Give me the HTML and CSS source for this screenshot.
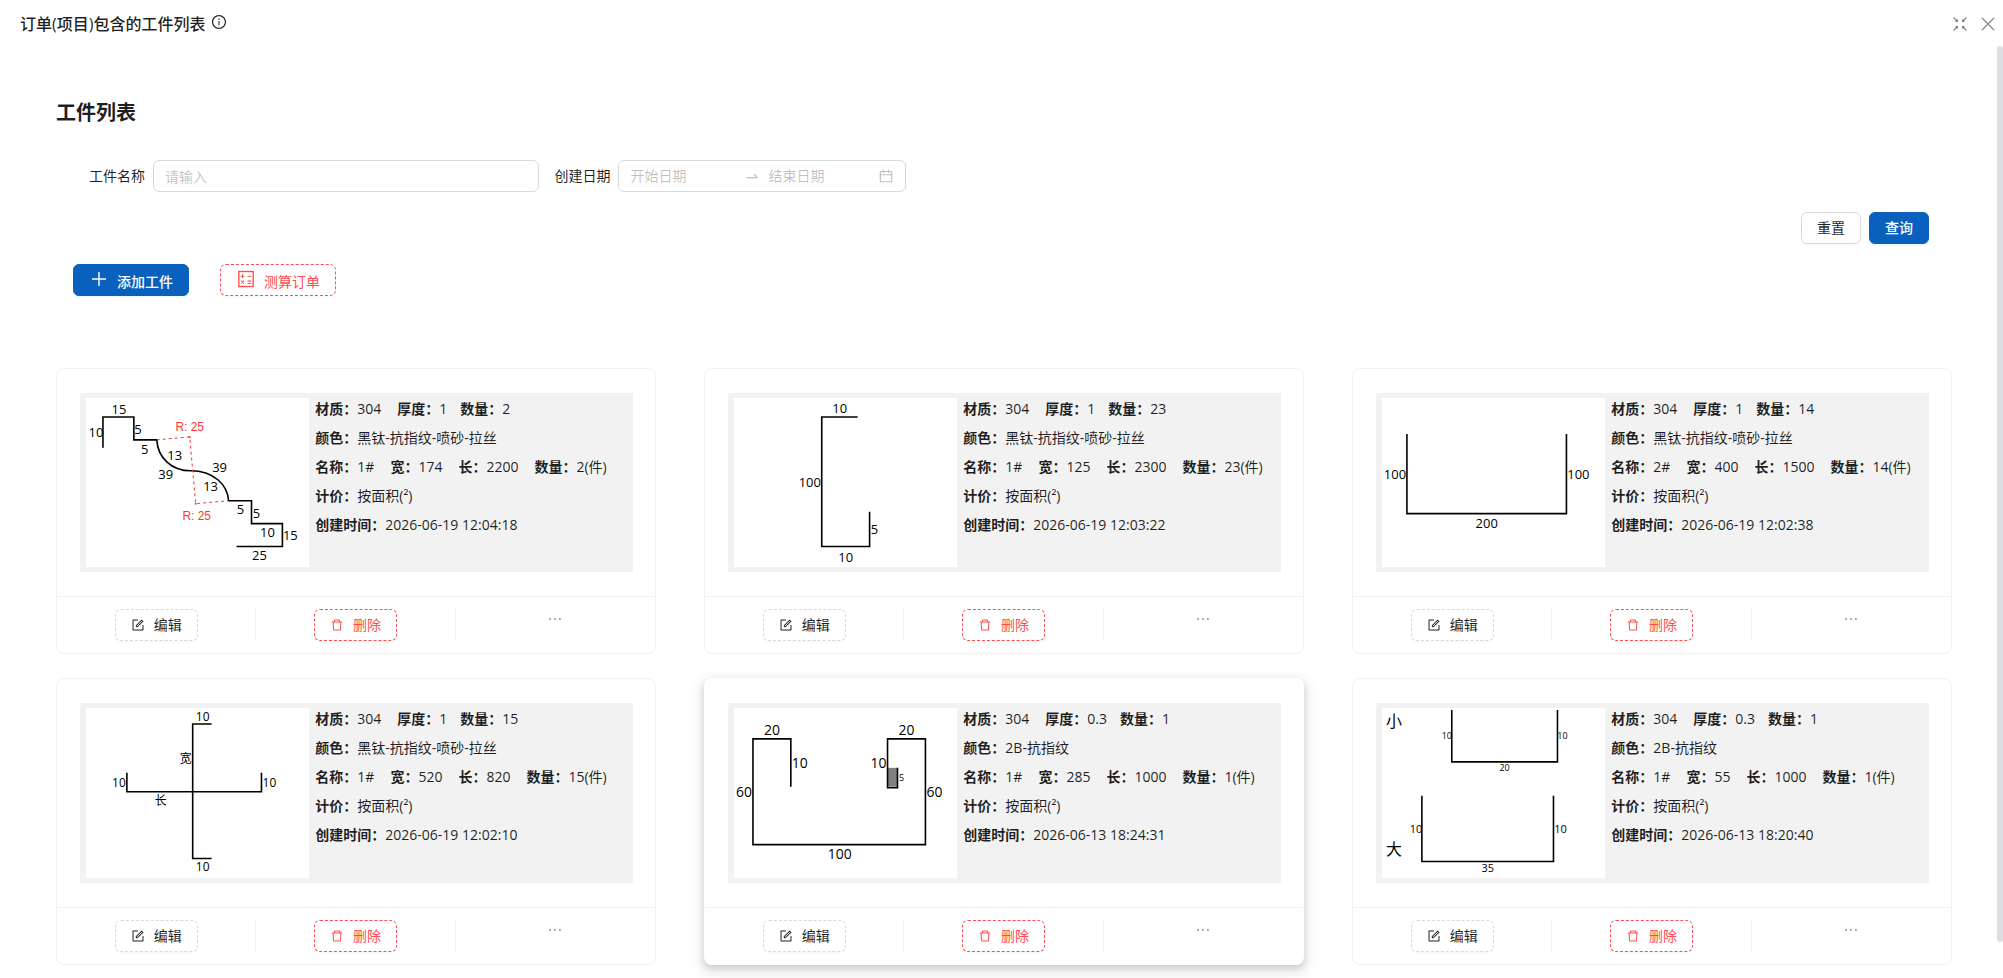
FILE: index.html
```
<!DOCTYPE html>
<html lang="zh-CN">
<head>
<meta charset="utf-8">
<meta name="viewport" content="width=device-width, initial-scale=1.0">
<title>订单(项目)包含的工件列表</title>
<link rel="stylesheet" href="styles.css">
</head>
<body>
<!-- icon set -->
<svg class="icon-defs" viewBox="0 0 1024 1024">
    <defs>
        <symbol id="i-info" viewBox="0 0 1024 1024"><path d="M512 64C264.6 64 64 264.6 64 512s200.6 448 448 448 448-200.6 448-448S759.4 64 512 64zm0 820c-205.4 0-372-166.6-372-372s166.6-372 372-372 372 166.6 372 372-166.6 372-372 372z"/><path d="M464 336a48 48 0 1096 0 48 48 0 10-96 0zm72 112h-48c-4.4 0-8 3.6-8 8v272c0 4.4 3.6 8 8 8h48c4.4 0 8-3.6 8-8V456c0-4.4-3.6-8-8-8z"/></symbol>
        <symbol id="i-shrink" viewBox="0 0 1024 1024"><g fill="none" stroke="currentColor" stroke-width="100"><path d="M40 40l240 240M984 40L744 280M40 984l240-240M984 984L744 744"/></g><path d="M370 130v240H130zM654 130v240h240zM370 894V654H130zM654 894V654h240z"/></symbol>
        <symbol id="i-close" viewBox="0 0 1024 1024"><path d="M60 60l904 904M964 60L60 964" fill="none" stroke="currentColor" stroke-width="96"/></symbol>
        <symbol id="i-swap" viewBox="0 0 1024 1024"><path d="M873.1 596.2l-164-208A32 32 0 00684 376h-64.8c-6.7 0-10.4 7.7-6.3 13l144.3 183H152c-4.4 0-8 3.6-8 8v60c0 4.4 3.6 8 8 8h695.9c26.8 0 41.7-30.8 25.2-51.8z"/></symbol>
        <symbol id="i-calendar" viewBox="0 0 1024 1024"><path d="M880 184H712v-64c0-4.4-3.6-8-8-8h-56c-4.4 0-8 3.6-8 8v64H384v-64c0-4.4-3.6-8-8-8h-56c-4.4 0-8 3.6-8 8v64H144c-17.7 0-32 14.3-32 32v664c0 17.7 14.3 32 32 32h736c17.7 0 32-14.3 32-32V216c0-17.7-14.3-32-32-32zm-40 656H184V460h656v380zM184 392V256h128v48c0 4.4 3.6 8 8 8h56c4.4 0 8-3.6 8-8v-48h256v48c0 4.4 3.6 8 8 8h56c4.4 0 8-3.6 8-8v-48h128v136H184z"/></symbol>
        <symbol id="i-plus" viewBox="0 0 1024 1024"><path d="M476 152h72v720h-72zM152 476h720v72H152z"/></symbol>
        <symbol id="i-calc" viewBox="0 0 1024 1024"><g fill="none" stroke="currentColor" stroke-width="70"><rect x="144" y="128" width="736" height="768"/><path d="M240 370h190M335 275v190M590 370h190M260 600l150 150M410 600L260 750M590 620h190M590 740h190" stroke-width="56"/></g></symbol>
        <symbol id="i-edit" viewBox="0 0 1024 1024"><path d="M904 512h-56c-4.4 0-8 3.6-8 8v320H184V184h320c4.4 0 8-3.6 8-8v-56c0-4.4-3.6-8-8-8H144c-17.7 0-32 14.3-32 32v736c0 17.7 14.3 32 32 32h736c17.7 0 32-14.3 32-32V520c0-4.4-3.6-8-8-8z"/><path d="M355.9 534.9L354 653.8c-.1 8.9 7.1 16.2 16 16.2h.4l118-2.9c2-.1 4-.9 5.4-2.3l415.9-415c3.1-3.1 3.1-8.2 0-11.3L785.4 114.3c-1.6-1.6-3.6-2.3-5.7-2.3s-4.1.8-5.7 2.3l-415.8 415a8.3 8.3 0 00-2.3 5.6zm63.5 23.6L779.7 199l45.2 45.1-360.5 359.7-45.7 1.1.7-46.4z"/></symbol>
        <symbol id="i-delete" viewBox="0 0 1024 1024"><path d="M360 184h-8c4.4 0 8-3.6 8-8v8h304v-8c0 4.4 3.6 8 8 8h-8v72h72v-80c0-35.3-28.7-64-64-64H352c-35.3 0-64 28.7-64 64v80h72v-72zm504 72H160c-17.7 0-32 14.3-32 32v32c0 4.4 3.6 8 8 8h60.4l24.7 523c1.6 34.1 29.8 61 63.9 61h454c34.2 0 62.3-26.8 63.9-61l24.7-523H888c4.4 0 8-3.6 8-8v-32c0-17.7-14.3-32-32-32zM731.3 840H292.7l-24.2-512h487l-24.2 512z"/></symbol>
        <symbol id="i-more" viewBox="0 0 1024 1024"><circle cx="150" cy="512" r="70"/><circle cx="512" cy="512" r="70"/><circle cx="874" cy="512" r="70"/></symbol>
    </defs>
</svg>

<div class="dialog">
    <header class="dialog-header">
        <h1>订单(项目)包含的工件列表</h1>
        <svg class="icon info"><use href="#i-info"/></svg>
        <div class="dialog-tools">
            <button class="tool" aria-label="退出全屏"><svg class="icon"><use href="#i-shrink"/></svg></button>
            <button class="tool" aria-label="关闭"><svg class="icon"><use href="#i-close"/></svg></button>
        </div>
    </header>

    <main>
        <h2>工件列表</h2>
        <form class="search" onsubmit="return false">
            <div class="fields">
                <label for="name">工件名称</label>
                <input class="text-input" id="name" type="text" placeholder="请输入">
                <label for="start">创建日期</label>
                <div class="range">
                    <input class="range-start" id="start" type="text" placeholder="开始日期">
                    <svg class="icon"><use href="#i-swap"/></svg>
                    <input type="text" placeholder="结束日期" aria-label="结束日期">
                    <svg class="icon"><use href="#i-calendar"/></svg>
                </div>
            </div>
            <div class="search-actions">
                <button class="btn" type="reset">重置</button>
                <button class="btn primary" type="submit">查询</button>
            </div>
        </form>
        <div class="toolbar">
            <button class="btn primary large"><svg class="icon"><use href="#i-plus"/></svg><span>添加工件</span></button>
            <button class="btn danger large"><svg class="icon"><use href="#i-calc"/></svg><span>测算订单</span></button>
        </div>

        <div class="list">
            <article class="card">
                <div class="card-body">
                    <svg class="drawing" viewBox="-1 0 224 170">
                        <path class="line" d="M16 50V19H47V42H70C71 60 85 73 104 73C127 73 141 87 142 103H165V126H196V149H150"/>
                        <path class="radius" d="M70 42L103 39L109 106L142 103"/>
                        <circle class="dot" cx="103" cy="39" r="1"/><circle class="dot" cx="109" cy="106" r="1"/>
                        <text x="32" y="16">15</text><text x="9" y="39">10</text><text x="51" y="36">5</text><text x="58" y="56">5</text>
                        <text x="88" y="62">13</text><text x="79" y="81">39</text><text x="133" y="74">39</text><text x="124" y="93">13</text>
                        <text class="red" x="103" y="33">R: 25</text><text class="red" x="110" y="122">R: 25</text>
                        <text x="154" y="116">5</text><text x="170" y="120">5</text><text x="181" y="139">10</text><text x="204" y="142">15</text><text x="173" y="162">25</text>
                    </svg>
                    <div class="info-rows">
                        <p><b>材质：</b><span>304</span><b>厚度：</b><span class="near">1</span><b>数量：</b><span>2</span></p>
                        <p><b>颜色：</b><span>黑钛-抗指纹-喷砂-拉丝</span></p>
                        <p><b>名称：</b><span>1#</span><b>宽：</b><span>174</span><b>长：</b><span>2200</span><b>数量：</b><span>2(件)</span></p>
                        <p><b>计价：</b><span>按面积(²)</span></p>
                        <p><b>创建时间：</b><span>2026-06-19 12:04:18</span></p>
                    </div>
                </div>
                <div class="card-actions">
                    <div><button class="btn dashed"><svg class="icon"><use href="#i-edit"/></svg>编辑</button></div>
                    <div><button class="btn danger"><svg class="icon"><use href="#i-delete"/></svg>删除</button></div>
                    <div><button class="more" aria-label="更多"><svg class="icon"><use href="#i-more"/></svg></button></div>
                </div>
            </article>

            <article class="card">
                <div class="card-body">
                    <svg class="drawing" viewBox="0 0 224 170">
                        <path class="line" d="M124 19H88V149H136V114"/>
                        <text x="106" y="15">10</text><text x="76" y="89">100</text><text x="141" y="136">5</text><text x="112" y="164">10</text>
                    </svg>
                    <div class="info-rows">
                        <p><b>材质：</b><span>304</span><b>厚度：</b><span class="near">1</span><b>数量：</b><span>23</span></p>
                        <p><b>颜色：</b><span>黑钛-抗指纹-喷砂-拉丝</span></p>
                        <p><b>名称：</b><span>1#</span><b>宽：</b><span>125</span><b>长：</b><span>2300</span><b>数量：</b><span>23(件)</span></p>
                        <p><b>计价：</b><span>按面积(²)</span></p>
                        <p><b>创建时间：</b><span>2026-06-19 12:03:22</span></p>
                    </div>
                </div>
                <div class="card-actions">
                    <div><button class="btn dashed"><svg class="icon"><use href="#i-edit"/></svg>编辑</button></div>
                    <div><button class="btn danger"><svg class="icon"><use href="#i-delete"/></svg>删除</button></div>
                    <div><button class="more" aria-label="更多"><svg class="icon"><use href="#i-more"/></svg></button></div>
                </div>
            </article>

            <article class="card">
                <div class="card-body">
                    <svg class="drawing" viewBox="0 0 224 170">
                        <path class="line" d="M25 36V116H185V36"/>
                        <text x="13" y="81">100</text><text x="197" y="81">100</text><text x="105" y="130">200</text>
                    </svg>
                    <div class="info-rows">
                        <p><b>材质：</b><span>304</span><b>厚度：</b><span class="near">1</span><b>数量：</b><span>14</span></p>
                        <p><b>颜色：</b><span>黑钛-抗指纹-喷砂-拉丝</span></p>
                        <p><b>名称：</b><span>2#</span><b>宽：</b><span>400</span><b>长：</b><span>1500</span><b>数量：</b><span>14(件)</span></p>
                        <p><b>计价：</b><span>按面积(²)</span></p>
                        <p><b>创建时间：</b><span>2026-06-19 12:02:38</span></p>
                    </div>
                </div>
                <div class="card-actions">
                    <div><button class="btn dashed"><svg class="icon"><use href="#i-edit"/></svg>编辑</button></div>
                    <div><button class="btn danger"><svg class="icon"><use href="#i-delete"/></svg>删除</button></div>
                    <div><button class="more" aria-label="更多"><svg class="icon"><use href="#i-more"/></svg></button></div>
                </div>
            </article>

            <article class="card">
                <div class="card-body">
                    <svg class="drawing" viewBox="-1 0 224 170">
                        <path class="line" d="M125 16H106V151H125M40 65V84H175V65"/>
                        <g class="size-12"><text x="116" y="13">10</text><text x="99" y="55">宽</text><text x="74" y="97">长</text><text x="32" y="79">10</text><text x="183" y="79">10</text><text x="116" y="163">10</text></g>
                    </svg>
                    <div class="info-rows">
                        <p><b>材质：</b><span>304</span><b>厚度：</b><span class="near">1</span><b>数量：</b><span>15</span></p>
                        <p><b>颜色：</b><span>黑钛-抗指纹-喷砂-拉丝</span></p>
                        <p><b>名称：</b><span>1#</span><b>宽：</b><span>520</span><b>长：</b><span>820</span><b>数量：</b><span>15(件)</span></p>
                        <p><b>计价：</b><span>按面积(²)</span></p>
                        <p><b>创建时间：</b><span>2026-06-19 12:02:10</span></p>
                    </div>
                </div>
                <div class="card-actions">
                    <div><button class="btn dashed"><svg class="icon"><use href="#i-edit"/></svg>编辑</button></div>
                    <div><button class="btn danger"><svg class="icon"><use href="#i-delete"/></svg>删除</button></div>
                    <div><button class="more" aria-label="更多"><svg class="icon"><use href="#i-more"/></svg></button></div>
                </div>
            </article>

            <article class="card raised">
                <div class="card-body">
                    <svg class="drawing" viewBox="0 0 224 170">
                        <rect x="154" y="60" width="10" height="19" fill="#808080"/>
                        <path class="line" d="M57 79V31H19V137H192V31H154V80H164V60"/>
                        <g class="size-14"><text x="38" y="27">20</text><text x="66" y="60">10</text><text x="10" y="89">60</text><text x="173" y="27">20</text><text x="145" y="60">10</text><text x="201" y="89">60</text><text x="106" y="151">100</text></g>
                        <text class="size-9" x="168" y="73">5</text>
                    </svg>
                    <div class="info-rows">
                        <p><b>材质：</b><span>304</span><b>厚度：</b><span class="near">0.3</span><b>数量：</b><span>1</span></p>
                        <p><b>颜色：</b><span>2B-抗指纹</span></p>
                        <p><b>名称：</b><span>1#</span><b>宽：</b><span>285</span><b>长：</b><span>1000</span><b>数量：</b><span>1(件)</span></p>
                        <p><b>计价：</b><span>按面积(²)</span></p>
                        <p><b>创建时间：</b><span>2026-06-13 18:24:31</span></p>
                    </div>
                </div>
                <div class="card-actions">
                    <div><button class="btn dashed"><svg class="icon"><use href="#i-edit"/></svg>编辑</button></div>
                    <div><button class="btn danger"><svg class="icon"><use href="#i-delete"/></svg>删除</button></div>
                    <div><button class="more" aria-label="更多"><svg class="icon"><use href="#i-more"/></svg></button></div>
                </div>
            </article>

            <article class="card">
                <div class="card-body">
                    <svg class="drawing" viewBox="0 0 224 170">
                        <path class="line" d="M70 2V54H176V2M40 88V154H172V88"/>
                        <g class="size-16"><text x="12" y="19">小</text><text x="12" y="147">大</text></g>
                        <g class="size-9"><text x="65" y="31">10</text><text x="181" y="31">10</text><text x="123" y="63">20</text></g>
                        <g class="size-11"><text x="34" y="125">10</text><text x="179" y="125">10</text><text x="106" y="164">35</text></g>
                    </svg>
                    <div class="info-rows">
                        <p><b>材质：</b><span>304</span><b>厚度：</b><span class="near">0.3</span><b>数量：</b><span>1</span></p>
                        <p><b>颜色：</b><span>2B-抗指纹</span></p>
                        <p><b>名称：</b><span>1#</span><b>宽：</b><span>55</span><b>长：</b><span>1000</span><b>数量：</b><span>1(件)</span></p>
                        <p><b>计价：</b><span>按面积(²)</span></p>
                        <p><b>创建时间：</b><span>2026-06-13 18:20:40</span></p>
                    </div>
                </div>
                <div class="card-actions">
                    <div><button class="btn dashed"><svg class="icon"><use href="#i-edit"/></svg>编辑</button></div>
                    <div><button class="btn danger"><svg class="icon"><use href="#i-delete"/></svg>删除</button></div>
                    <div><button class="more" aria-label="更多"><svg class="icon"><use href="#i-more"/></svg></button></div>
                </div>
            </article>
        </div>
    </main>
    <div class="scroll-thumb"></div>
</div>
</body>
</html>
```
FILE: styles.css
```
* {
    box-sizing: border-box;
}

body {
    margin: 0;
    background: #fff;
    color: rgba(0, 0, 0, 0.88);
    font: 14px/22px "Open Sans", "Noto Sans CJK SC", sans-serif;
}

h1, h2, p {
    margin: 0;
}

button, input {
    font: inherit;
    color: inherit;
}

.icon-defs {
    display: none;
}

.icon {
    width: 14px;
    height: 14px;
    flex: none;
    fill: currentColor;
}

.dialog {
    position: relative;
    min-height: 100vh;
}

.dialog-header {
    display: flex;
    align-items: center;
    height: 48px;
    padding: 0 8px 0 20px;
}

.dialog-header h1 {
    font-size: 16px;
    line-height: 24px;
    font-weight: 500;
}

.info {
    width: 16px;
    height: 16px;
    margin: 0 0 4px 6px;
}

.dialog-tools {
    display: flex;
    gap: 14px;
    margin-left: auto;
    color: rgba(0, 0, 0, 0.45);
}

.tool, .more {
    display: flex;
    padding: 0;
    border: 0;
    background: none;
    cursor: pointer;
}

.scroll-thumb {
    position: absolute;
    top: 46px;
    right: 0;
    bottom: 36px;
    width: 6px;
    border-radius: 3px;
    background: #dddee0;
}

main {
    padding: 49px 51px 12px 56px;
}

h2 {
    font-size: 20px;
    line-height: 32px;
    font-weight: 600;
}

.search {
    padding: 31px 23px 0 33px;
}

.fields {
    display: flex;
    align-items: center;
}

.fields label {
    margin-right: 8px;
}

.text-input, .range {
    height: 32px;
    border: 1px solid #d9d9d9;
    border-radius: 6px;
    padding: 0 11px;
}

.text-input {
    width: 21%;
    margin-right: 15px;
}

.range {
    display: flex;
    align-items: center;
    width: 288px;
    color: rgba(0, 0, 0, 0.25);
}

.range .icon {
    width: 16px;
    height: 16px;
}

.range input {
    flex: 1;
    min-width: 0;
    padding: 0;
    border: 0;
    outline: 0;
}

.range .range-start {
    margin-right: 4px;
}

.range input + .icon {
    margin-right: 8px;
}

.range .icon:last-child {
    margin-right: 0;
}

::placeholder {
    color: rgba(0, 0, 0, 0.25);
    opacity: 1;
}

.search-actions {
    display: flex;
    justify-content: flex-end;
    gap: 8px;
    margin-top: 20px;
}

.btn {
    display: inline-flex;
    align-items: center;
    justify-content: center;
    gap: 9px;
    height: 32px;
    padding: 0 15px;
    border: 1px solid #d9d9d9;
    border-radius: 6px;
    background: #fff;
    box-shadow: 0 2px 0 rgba(0, 0, 0, 0.02);
    cursor: pointer;
}

.btn.primary {
    border-color: #0960bd;
    background: #0960bd;
    color: #fff;
    font-weight: 500;
    box-shadow: 0 2px 0 rgba(5, 138, 255, 0.06);
}

.btn.dashed {
    border-style: dashed;
}

.btn.danger {
    border: 1px dashed #ff4d4f;
    color: #ff4d4f;
}

.btn.large {
    gap: 8px;
}

.btn.large .icon {
    width: 20px;
    height: 20px;
    margin-bottom: 2px;
}

.btn.large span {
    padding-top: 4px;
}

.toolbar {
    display: flex;
    gap: 31px;
    padding: 20px 17px 0;
}

.list {
    display: grid;
    grid-template-columns: repeat(3, 1fr);
    gap: 24px 48px;
    margin-top: 72px;
}

.card {
    border: 1px solid #f0f0f0;
    border-radius: 8px;
    background: #fff;
}

.card.raised {
    border-color: transparent;
    box-shadow: 0 1px 2px -2px rgba(0, 0, 0, 0.16), 0 3px 6px rgba(0, 0, 0, 0.12), 0 5px 12px 4px rgba(0, 0, 0, 0.09);
}

.card-body {
    display: grid;
    grid-template-columns: minmax(0, 5fr) minmax(0, 7fr);
    gap: 6px;
    margin: 24px 22px 24px 23px;
    padding: 5px 5px 5px 6px;
    background: #f2f2f2;
}

.drawing {
    display: block;
    width: 100%;
    background: #fff;
    font-size: 13px;
    text-anchor: middle;
}

.line {
    fill: none;
    stroke: #000;
    stroke-width: 1.6;
}

.radius {
    fill: none;
    stroke: #f33;
    stroke-dasharray: 3 3;
}

.dot {
    fill: #f33;
}

.red {
    fill: #f33;
    font: 12px "Liberation Sans", sans-serif;
}

.size-9 {
    font-size: 9px;
}

.size-11 {
    font-size: 11px;
}

.size-12 {
    font-size: 12px;
}

.size-14 {
    font-size: 14px;
}

.size-16 {
    font-size: 16px;
}

.info-rows {
    display: flex;
    flex-direction: column;
    gap: 7px;
    white-space: nowrap;
}

.info-rows b {
    font-weight: 600;
}

.info-rows span {
    margin-right: 16px;
}

.info-rows .near {
    margin-right: 13px;
}

.card-actions {
    display: grid;
    grid-template-columns: repeat(3, 1fr);
    padding: 12px 0;
    border-top: 1px solid #f0f0f0;
}

.card-actions div {
    display: flex;
    justify-content: center;
    align-items: flex-start;
    border-right: 1px solid #f0f0f0;
}

.card-actions div:last-child {
    border-right: 0;
}

.more {
    padding: 3px;
    color: rgba(0, 0, 0, 0.45);
}
```
